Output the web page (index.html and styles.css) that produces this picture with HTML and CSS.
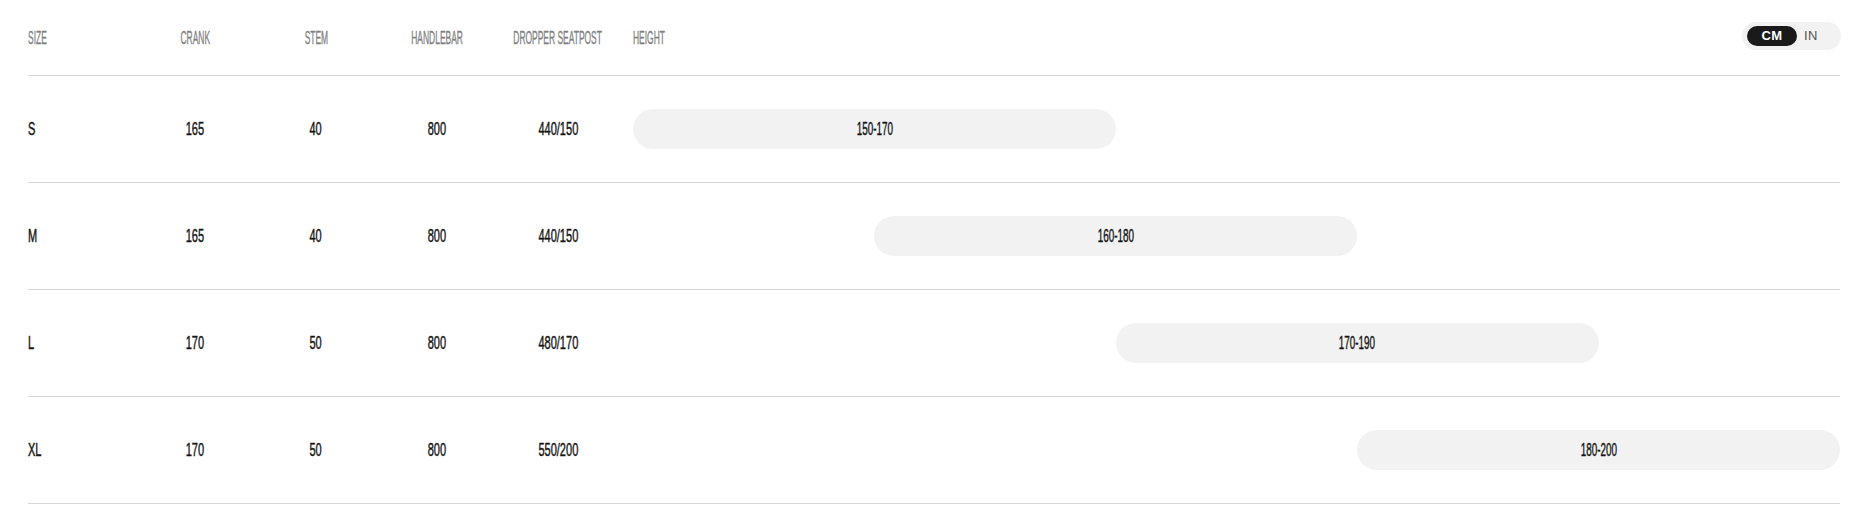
FILE: index.html
```html
<!DOCTYPE html>
<html lang="en">
<head>
<meta charset="utf-8">
<title>Size chart</title>
<link rel="stylesheet" href="styles.css">
</head>
<body>
<div class="chart">
  <div class="row head">
    <div class="cell left"><span class="t">SIZE</span></div>
    <div class="cell"><span class="t">CRANK</span></div>
    <div class="cell"><span class="t">STEM</span></div>
    <div class="cell"><span class="t">HANDLEBAR</span></div>
    <div class="cell"><span class="t">DROPPER SEATPOST</span></div>
    <div class="cell heightcol">
      <span class="t">HEIGHT</span>
      <div class="toggle"><span class="opt on">CM</span><span class="opt">IN</span></div>
    </div>
  </div>

  <div class="row">
    <div class="cell left"><span class="v">S</span></div>
    <div class="cell"><span class="v">165</span></div>
    <div class="cell"><span class="v">40</span></div>
    <div class="cell"><span class="v">800</span></div>
    <div class="cell"><span class="v">440/150</span></div>
    <div class="cell track"><div class="bar" style="margin-left:0%"><span class="v">150-170</span></div></div>
  </div>

  <div class="row">
    <div class="cell left"><span class="v">M</span></div>
    <div class="cell"><span class="v">165</span></div>
    <div class="cell"><span class="v">40</span></div>
    <div class="cell"><span class="v">800</span></div>
    <div class="cell"><span class="v">440/150</span></div>
    <div class="cell track"><div class="bar" style="margin-left:20%"><span class="v">160-180</span></div></div>
  </div>

  <div class="row">
    <div class="cell left"><span class="v">L</span></div>
    <div class="cell"><span class="v">170</span></div>
    <div class="cell"><span class="v">50</span></div>
    <div class="cell"><span class="v">800</span></div>
    <div class="cell"><span class="v">480/170</span></div>
    <div class="cell track"><div class="bar" style="margin-left:40%"><span class="v">170-190</span></div></div>
  </div>

  <div class="row">
    <div class="cell left"><span class="v">XL</span></div>
    <div class="cell"><span class="v">170</span></div>
    <div class="cell"><span class="v">50</span></div>
    <div class="cell"><span class="v">800</span></div>
    <div class="cell"><span class="v">550/200</span></div>
    <div class="cell track"><div class="bar" style="margin-left:60%"><span class="v">180-200</span></div></div>
  </div>
</div>
</body>
</html>
```
FILE: styles.css
```css
html, body {
  margin: 0;
  padding: 0;
  background: #ffffff;
}

body {
  font-family: "Liberation Sans", Arial, sans-serif;
}

.chart {
  padding: 0 23px 0 28px;
}

.row {
  display: grid;
  grid-template-columns: 92px 92px 92px 92px 92px 1fr;
  column-gap: 29px;
  height: 106px;
  border-bottom: 1px solid #d6d6d6;
  align-items: center;
}

.row.head {
  height: 75px;
}

.cell {
  display: flex;
  justify-content: center;
  align-items: center;
  white-space: nowrap;
}

.cell.left {
  justify-content: flex-start;
}

.t, .v {
  display: inline-block;
  font-size: 19px;
  line-height: 20px;
  font-weight: normal;
  white-space: nowrap;
}

.t {
  color: #808080;
  transform: scaleX(0.445);
  -webkit-text-stroke: 0.35px currentColor;
}

.v {
  color: #141414;
  transform: scaleX(0.58);
  -webkit-text-stroke: 0.45px currentColor;
}

.cell.left .t, .cell.left .v,
.heightcol .t {
  transform-origin: left center;
}

.heightcol {
  justify-content: space-between;
}

.toggle {
  display: flex;
  align-items: center;
  height: 28px;
  width: 99px;
  box-sizing: border-box;
  padding: 0 5px;
  background: #f2f2f2;
  border-radius: 14px;
  margin-right: -1px;
  margin-top: -3px;
}

.opt {
  font-family: "Liberation Sans", Arial, sans-serif;
  font-size: 13px;
  line-height: 20px;
  color: #555555;
  letter-spacing: 0.5px;
}

.opt.on {
  width: 50px;
  height: 20px;
  border-radius: 10px;
  background: #1a1a1a;
  color: #ffffff;
  font-weight: bold;
  text-align: center;
  margin-right: 7px;
}

.track {
  justify-content: flex-start;
}

.bar {
  width: 40%;
  height: 40px;
  border-radius: 20px;
  background: #f2f2f2;
  display: flex;
  align-items: center;
  justify-content: center;
}

.bar .v {
  transform: scaleX(0.52);
}
```
